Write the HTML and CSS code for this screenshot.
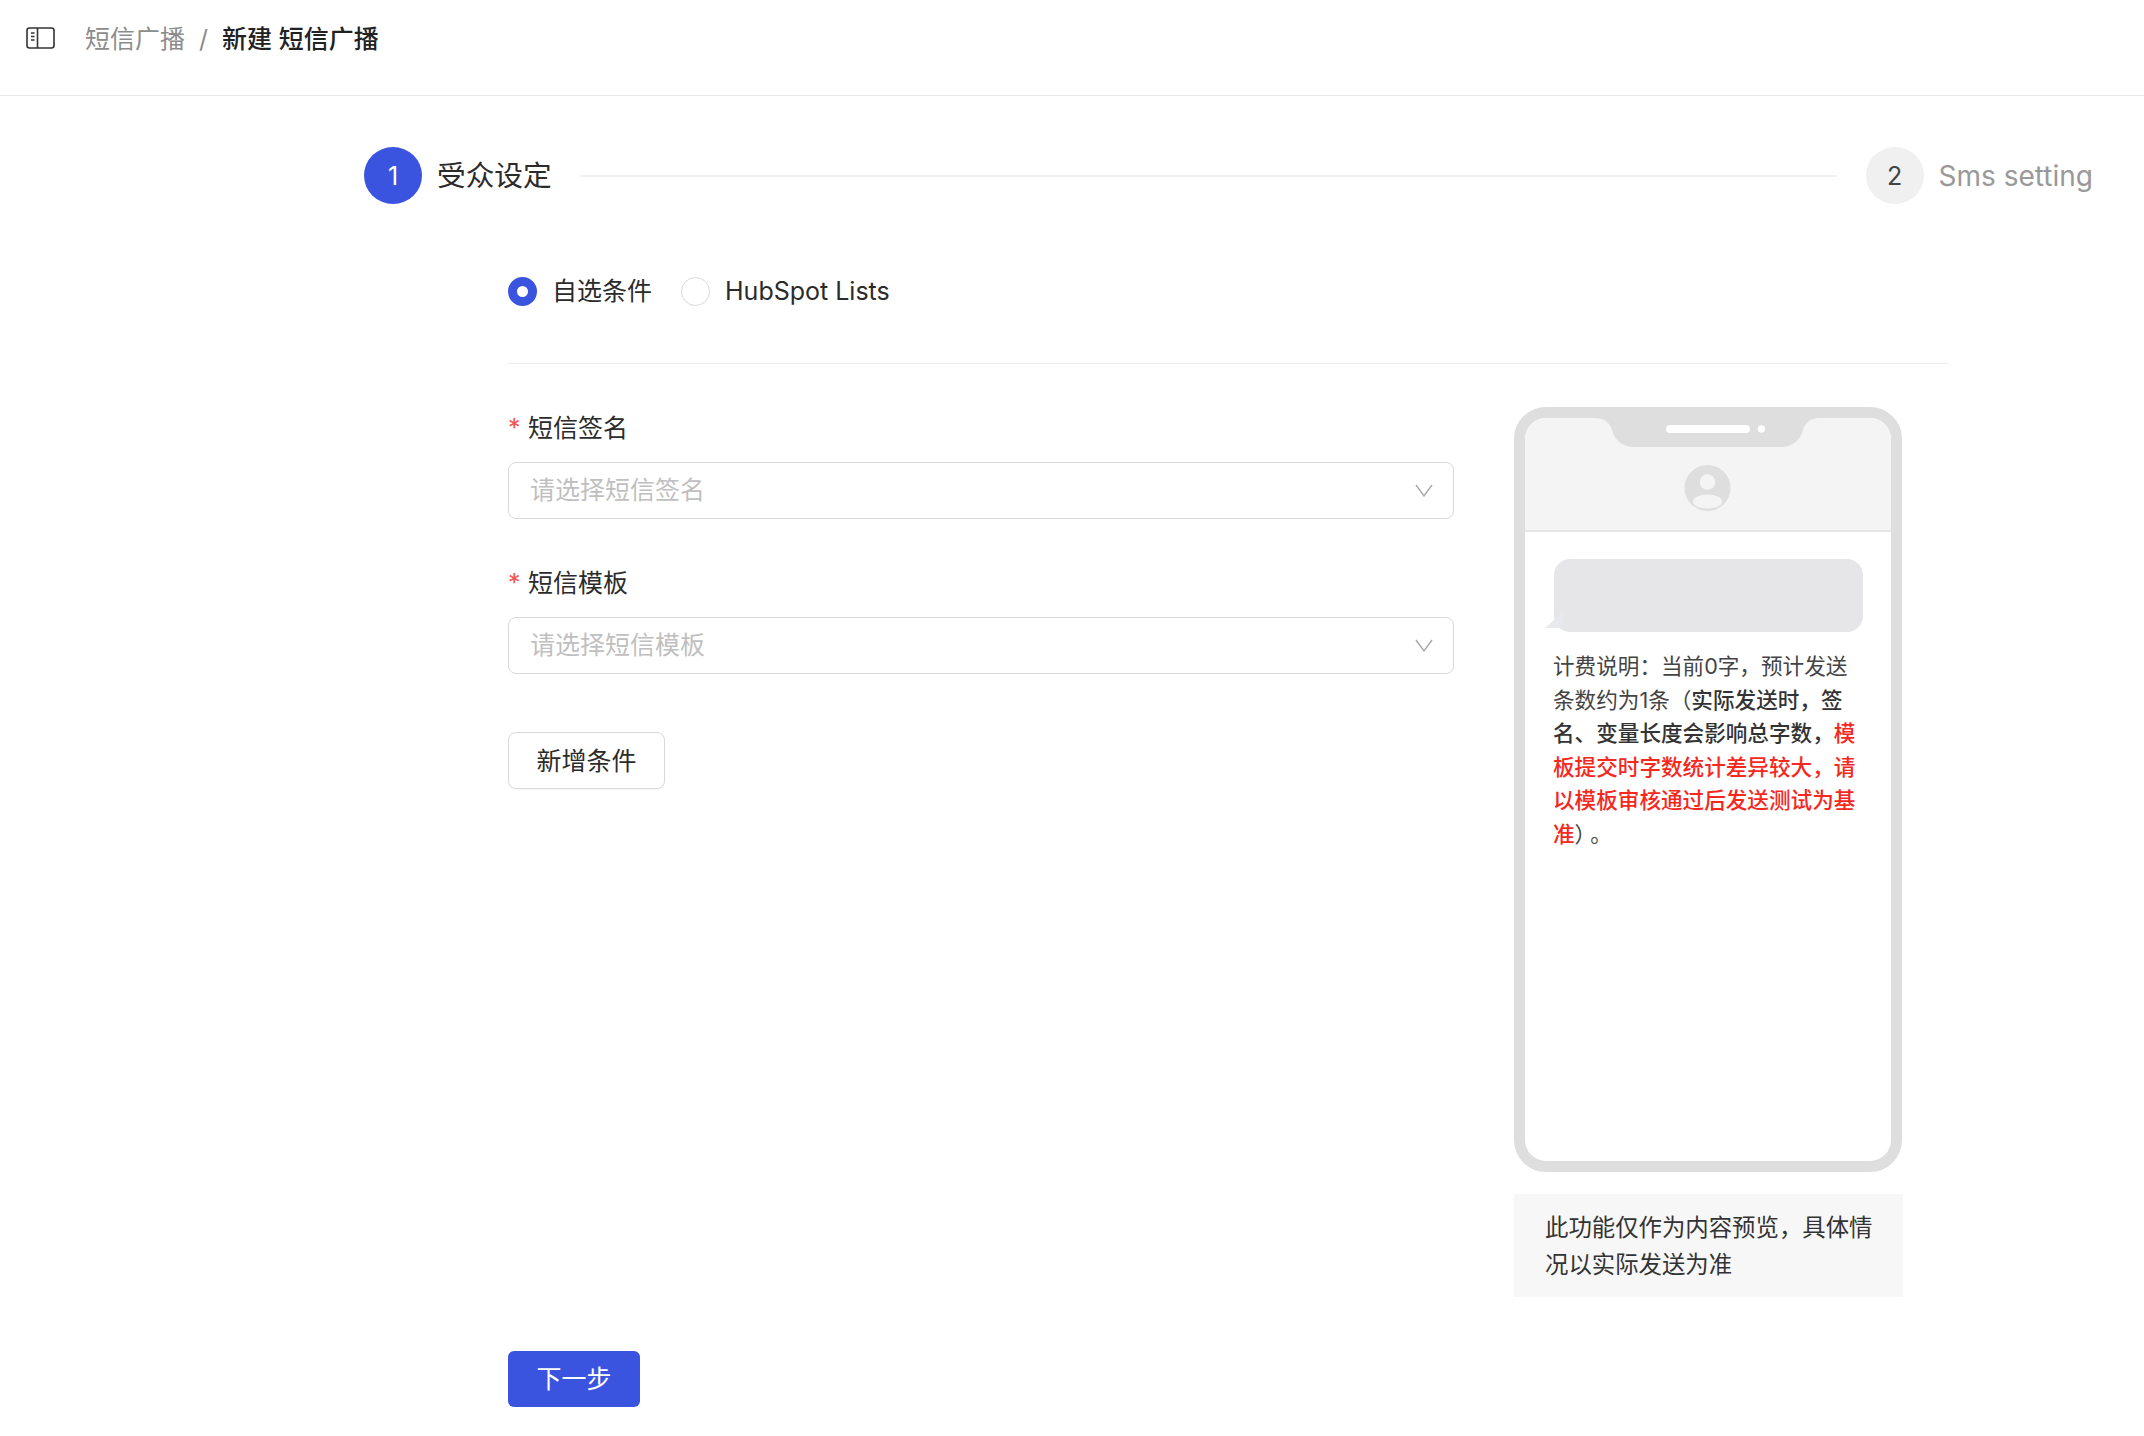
FILE: index.html
```html
<!DOCTYPE html>
<html lang="zh-CN">
<head>
<meta charset="utf-8">
<title>新建 短信广播</title>
<link rel="stylesheet" href="styles.css">
</head>
<body>
<header class="topbar">
  <svg class="side-icon" width="29" height="22" viewBox="0 0 29 22" fill="none">
    <rect x="1" y="1" width="27" height="20" rx="2.5" stroke="#333" stroke-width="1.6"/>
    <path d="M11.5 1v20" stroke="#333" stroke-width="1.6"/>
    <path d="M5 6h3.5M5 9.5h3.5M5 13h3.5" stroke="#333" stroke-width="1.5"/>
  </svg>
  <nav class="crumbs">
    <span class="crumb-muted">短信广播</span>
    <span class="crumb-sep">/</span>
    <span class="crumb-current">新建 短信广播</span>
  </nav>
</header>

<main class="page">
  <div class="steps">
    <div class="step-dot step-dot-active">1</div>
    <div class="step-title">受众设定</div>
    <div class="step-line"></div>
    <div class="step-dot step-dot-idle">2</div>
    <div class="step-title step-title-idle">Sms setting</div>
  </div>

  <div class="form-area">
    <div class="radios">
      <label class="radio"><span class="radio-mark radio-on"></span>自选条件</label>
      <label class="radio"><span class="radio-mark"></span>HubSpot Lists</label>
    </div>
    <div class="rule"></div>

    <div class="columns">
      <section class="fields">
        <div class="field-label"><span class="req">*</span>短信签名</div>
        <div class="select">
          <span class="select-text">请选择短信签名</span>
          <svg class="caret" width="18" height="13" viewBox="0 0 18 13" fill="none"><path d="M1 1l8 11 8-11" stroke="#a8a8a8" stroke-width="1.4"/></svg>
        </div>
        <div class="field-label field-label-next"><span class="req">*</span>短信模板</div>
        <div class="select">
          <span class="select-text">请选择短信模板</span>
          <svg class="caret" width="18" height="13" viewBox="0 0 18 13" fill="none"><path d="M1 1l8 11 8-11" stroke="#a8a8a8" stroke-width="1.4"/></svg>
        </div>
        <button class="btn-add" type="button">新增条件</button>
      </section>

      <aside class="preview">
        <div class="phone">
          <svg class="phone-head" width="366" height="114" viewBox="0 0 366 114">
            <rect width="366" height="112" fill="#f4f4f4"/>
            <rect y="112" width="366" height="2" fill="#e6e6e6"/>
            <path d="M70 0C80 0 85 5 87 12C90 23 98 29 110 29H255C267 29 275 23 278 12C280 5 285 0 295 0Z" fill="#dedede"/>
            <rect x="141" y="7" width="84" height="8" rx="4" fill="#fff"/>
            <circle cx="236.5" cy="11" r="3.7" fill="#fff"/>
            <circle cx="182.5" cy="70" r="23" fill="#dedede"/>
            <circle cx="182.5" cy="64" r="7.7" fill="#f4f4f4"/>
            <ellipse cx="182.5" cy="83.5" rx="14.5" ry="7" fill="#f4f4f4"/>
          </svg>
          <div class="bubble"></div>
          <p class="sms-note">计费说明：当前0字，预计发送条数约为1条（<b>实际发送时，签名、变量长度会影响总字数，</b><b class="warn">模板提交时字数统计差异较大，请以模板审核通过后发送测试为基准</b><span class="close-mark">）</span>。</p>
        </div>
        <div class="preview-tip">此功能仅作为内容预览，具体情况以实际发送为准</div>
      </aside>
    </div>

    <button class="btn-next" type="button">下一步</button>
  </div>
</main>
</body>
</html>
```

FILE: styles.css
```css
* { box-sizing: border-box; }
html, body { margin: 0; padding: 0; background: #fff; }
body {
  font-family: Inter, "Noto Sans CJK SC", "Noto Sans", sans-serif;
  font-size: 25px;
  color: #2b2b2b;
  text-spacing-trim: space-all;
}
.topbar {
  height: 96px;
  border-bottom: 1px solid #e8e8e8;
  display: flex;
  align-items: flex-start;
  padding: 27px 0 0 26px;
}
.side-icon { display: block; flex: none; }
.crumbs {
  display: flex;
  align-items: center;
  margin: -5px 0 0 30px;
  height: 34px;
  line-height: 34px;
}
.crumb-muted { color: #8c8c8c; }
.crumb-sep { color: #8c8c8c; margin: 0 14px; }
.crumb-current { color: #222; font-weight: 500; }

.page { padding: 51px 51px 0 364px; }
.steps { display: flex; align-items: center; height: 57px; }
.step-dot {
  width: 58px;
  height: 57px;
  border-radius: 50%;
  display: flex;
  align-items: center;
  justify-content: center;
  flex: none;
}
.step-dot-active { background: #3a54e0; color: #fff; }
.step-dot-idle { background: #f0f0f0; color: #444; margin-left: 29px; }
.step-title {
  font-size: 28.7px;
  line-height: 34px;
  margin-left: 15px;
  color: #2b2b2b;
  white-space: nowrap;
}
.step-title-idle { color: #999; font-size: 28px; }
.step-line { flex: 1; height: 2px; background: #f0f0f0; margin-left: 28px; }

.form-area { margin: 73px 0 0 144px; width: 1440px; }
.radios { display: flex; height: 29px; gap: 29px; }
.radio { display: flex; align-items: center; gap: 15px; line-height: 29px; }
.radio-mark {
  width: 29px;
  height: 29px;
  border-radius: 50%;
  border: 1px solid #d9d9d9;
  background: #fff;
  flex: none;
}
.radio-on { border: 9px solid #3a54e0; }
.rule { height: 1px; background: #ededed; margin-top: 57px; }

.columns { display: flex; margin-top: 43px; }
.fields { width: 946px; padding-top: 4px; flex: none; }
.field-label { height: 34px; line-height: 34px; display: flex; }
.field-label-next { margin-top: 47px; }
.req { color: #f5564e; width: 20px; flex: none; }
.select {
  height: 57px;
  margin-top: 17px;
  border: 1px solid #d9d9d9;
  border-radius: 8px;
  display: flex;
  align-items: center;
  justify-content: space-between;
  padding: 0 20px 0 21px;
  color: #bfbfbf;
}
.select-text { padding-bottom: 6px; }
.caret { display: block; flex: none; }
.btn-add {
  display: block;
  margin-top: 58px;
  width: 157px;
  height: 57px;
  padding: 0 0 4px;
  font: inherit;
  color: #2b2b2b;
  background: #fff;
  border: 1px solid #d9d9d9;
  border-radius: 8px;
  box-shadow: 0 2px 0 rgba(0, 0, 0, 0.02);
}

.preview { margin-left: 60px; width: 389px; flex: none; }
.phone {
  width: 388px;
  height: 765px;
  border: 11px solid #dedede;
  border-radius: 32px;
  background: #fff;
  overflow: hidden;
}
.phone-head { display: block; }
.bubble {
  position: relative;
  width: 309px;
  height: 73px;
  margin: 27px 0 0 29px;
  background: #e6e6e8;
  border-radius: 16px;
}
.bubble::before {
  content: "";
  position: absolute;
  left: -9px;
  bottom: 4px;
  width: 18px;
  height: 16px;
  background: #e8e8ef;
  clip-path: polygon(100% 0, 100% 100%, 0 100%);
}
.sms-note {
  margin: 18px 0 0 28px;
  width: 312px;
  font-size: 21.6px;
  line-height: 33.6px;
  color: #444;
}
.sms-note b { font-weight: 500; color: #333; }
.sms-note b.warn { color: #f5281e; }
.close-mark { margin-right: -6px; }
.preview-tip {
  margin-top: 22px;
  height: 103px;
  padding: 15px 20px 0 31px;
  background: #f7f7f7;
  font-size: 23.4px;
  line-height: 37px;
  color: #333;
}
.btn-next {
  display: block;
  margin-top: 54px;
  width: 132px;
  height: 56px;
  padding: 0 0 4px;
  font: inherit;
  color: #fff;
  background: #3a54e0;
  border: 0;
  border-radius: 6px;
}
```
